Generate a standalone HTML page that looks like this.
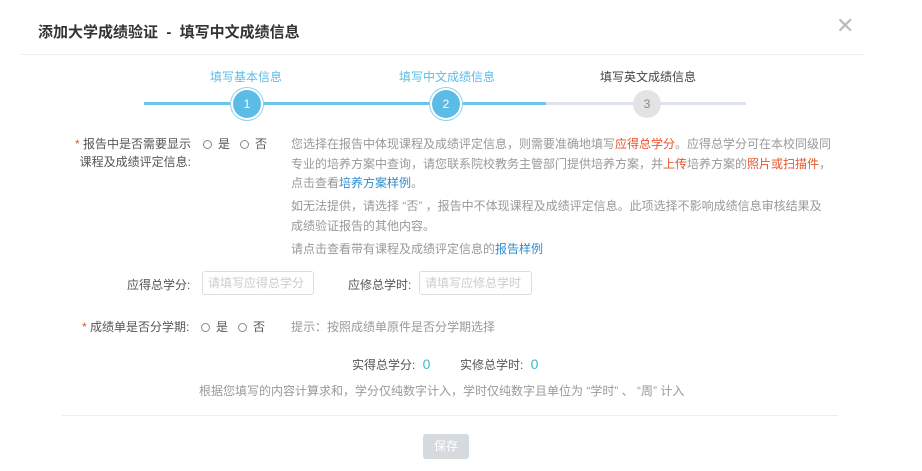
<!DOCTYPE html>
<html><head><meta charset="utf-8"><style>
*{margin:0;padding:0;box-sizing:border-box}
body{width:922px;height:471px;background:#fff;font-family:"Liberation Sans","Noto Sans CJK SC",sans-serif;font-size:12px;color:#555;position:relative;overflow:hidden}
.a{position:absolute;white-space:nowrap}
.g{color:#999}
.r{color:#e8532b}
.b{color:#2d8ccf}
.rad{display:inline-block;width:9px;height:9px;border:1px solid #888;border-radius:50%;vertical-align:-1px;margin-right:6px}
.c{position:absolute;width:28px;height:28px;border-radius:50%;top:90px;text-align:center;line-height:28px;font-size:12px}
.c.on{background:#5bbde6;color:#fff;box-shadow:0 0 0 2px #fff,0 0 0 3px #8fd0ee}
.c.off{background:#e3e3e3;color:#888}
.inp{position:absolute;height:24px;border:1px solid #ddd;border-radius:3px;color:#ccc;padding-left:5px;line-height:22px;font-size:12px}
</style></head><body>
<div class="a" style="left:38px;top:21px;font-size:15px;font-weight:bold;color:#333">添加大学成绩验证 &nbsp;- &nbsp;填写中文成绩信息</div>
<div class="a" style="left:836px;top:13px;font-size:22px;color:#bbb">✕</div>
<div class="a" style="left:20px;top:54px;width:845px;height:1px;background:#eee"></div>
<div class="a" style="left:210px;top:68px;color:#5bbde6">填写基本信息</div>
<div class="a" style="left:399px;top:68px;color:#5bbde6">填写中文成绩信息</div>
<div class="a" style="left:600px;top:68px;color:#444">填写英文成绩信息</div>
<div class="a" style="left:144px;top:102px;width:402px;height:3px;background:#6cc4ea"></div>
<div class="a" style="left:546px;top:102px;width:200px;height:3px;background:#dde2ec"></div>
<div class="c on" style="left:233px">1</div>
<div class="c on" style="left:432px">2</div>
<div class="c off" style="left:633px">3</div>
<div class="a" style="left:73px;top:135px;line-height:18px;text-align:right;width:118px"><span class="r">*</span> 报告中是否需要显示<br>课程及成绩评定信息:</div>
<div class="a" style="left:203px;top:135px;line-height:18px"><span class="rad"></span>是 &nbsp;&nbsp;<span class="rad"></span>否</div>
<div class="a g" style="left:291px;top:135px;line-height:19.5px">您选择在报告中体现课程及成绩评定信息，则需要准确地填写<span class="r">应得总学分</span>。应得总学分可在本校同级同<br>专业的培养方案中查询，请您联系院校教务主管部门提供培养方案，并<span class="r">上传</span>培养方案的<span class="r">照片或扫描件</span>，<br>点击查看<span class="b">培养方案样例</span>。</div>
<div class="a g" style="left:291px;top:197px;line-height:19.5px">如无法提供，请选择 “否” ，报告中不体现课程及成绩评定信息。此项选择不影响成绩信息审核结果及<br>成绩验证报告的其他内容。</div>
<div class="a g" style="left:291px;top:240px">请点击查看带有课程及成绩评定信息的<span class="b">报告样例</span></div>
<div class="a" style="left:127px;top:276px">应得总学分:</div>
<div class="inp" style="left:202px;top:271px;width:112px">请填写应得总学分</div>
<div class="a" style="left:348px;top:276px">应修总学时:</div>
<div class="inp" style="left:419px;top:271px;width:113px">请填写应修总学时</div>
<div class="a" style="left:82px;top:318px"><span class="r">*</span> 成绩单是否分学期:</div>
<div class="a" style="left:201px;top:318px"><span class="rad"></span>是 &nbsp;&nbsp;<span class="rad"></span>否</div>
<div class="a g" style="left:291px;top:318px">提示：按照成绩单原件是否分学期选择</div>
<div class="a" style="left:352px;top:356px">实得总学分: <span style="color:#3cb8d0;font-size:14px;margin-left:4px">0</span></div>
<div class="a" style="left:460px;top:356px">实修总学时: <span style="color:#3cb8d0;font-size:14px;margin-left:4px">0</span></div>
<div class="a g" style="left:199px;top:382px">根据您填写的内容计算求和，学分仅纯数字计入，学时仅纯数字且单位为 “学时” 、 “周” 计入</div>
<div class="a" style="left:62px;top:415px;width:776px;height:1px;background:#eee"></div>
<div class="a" style="left:423px;top:434px;width:46px;height:25px;background:#d5dadf;border-radius:3px;color:#fff;text-align:center;line-height:25px">保存</div>
</body></html>
